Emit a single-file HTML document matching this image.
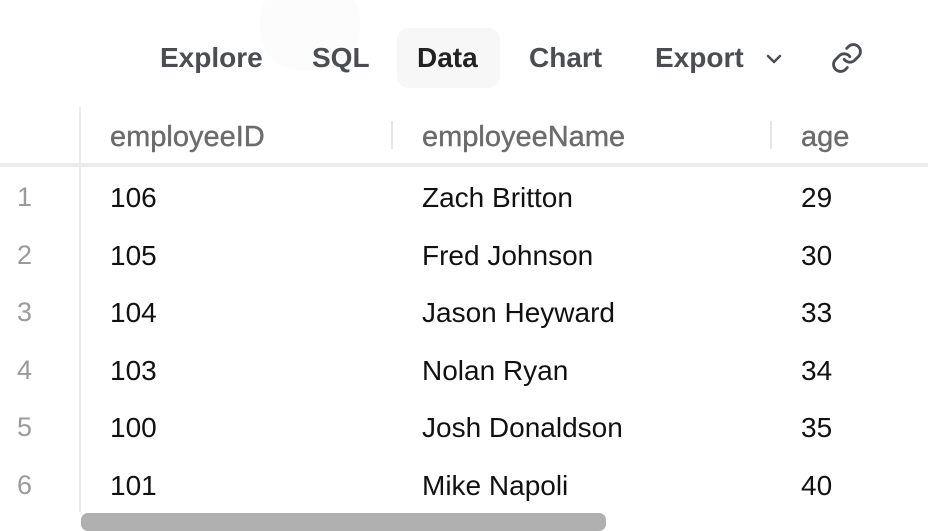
<!DOCTYPE html>
<html><head><style>
body{margin:0;width:928px;height:525px;overflow:hidden;background:#fff;font-family:"Liberation Sans",sans-serif;position:relative}
.a{position:absolute;white-space:nowrap}
.nav{font-size:28px;font-weight:bold;color:#4a4d52;top:42px}
.h{font-size:29px;color:#6b6b6b;top:121px;-webkit-text-stroke:0.4px #6b6b6b}
.n{font-size:27px;color:#9a9a9a;left:17px}
.c{font-size:28px;color:#111}
</style></head><body>
<div class="a" style="left:260px;top:-20px;width:100px;height:90px;border-radius:40px;background:#fcfcfc"></div>
<div class="a" style="left:397px;top:28px;width:103px;height:60px;border-radius:12px;background:#f7f7f7"></div>
<div class="a nav" style="left:160px">Explore</div>
<div class="a nav" style="left:312px">SQL</div>
<div class="a nav" style="left:417px;color:#222">Data</div>
<div class="a nav" style="left:529px">Chart</div>
<div class="a nav" style="left:655px">Export</div>
<svg class="a" style="left:764px;top:51px" width="20" height="16" viewBox="0 0 20 16"><path d="M4 5l6 6 6-6" fill="none" stroke="#4a4d52" stroke-width="2.5" stroke-linecap="round" stroke-linejoin="round"/></svg>
<svg class="a" style="left:830px;top:41px" width="34" height="34" viewBox="0 0 24 24" fill="none" stroke="#4a4d52" stroke-width="2" stroke-linecap="round"><path d="M10 13a5 5 0 0 0 7.5.5l3-3a5 5 0 0 0-7-7l-1.7 1.7"/><path d="M14 11a5 5 0 0 0-7.5-.5l-3 3a5 5 0 0 0 7 7l1.7-1.7"/></svg>
<div class="a" style="left:79px;top:107px;width:2px;height:405px;background:#ececec"></div>
<div class="a" style="left:391px;top:121px;width:2px;height:28px;background:#e6e6e6"></div>
<div class="a" style="left:770px;top:121px;width:2px;height:28px;background:#e6e6e6"></div>
<div class="a" style="left:0;top:163px;width:928px;height:4px;background:#ececec"></div>
<div class="a h" style="left:110px">employeeID</div>
<div class="a h" style="left:422px">employeeName</div>
<div class="a h" style="left:801px">age</div>
<div class="a n" style="top:182px">1</div><div class="a c" style="left:110px;top:182px">106</div><div class="a c" style="left:422px;top:182px">Zach Britton</div><div class="a c" style="left:801px;top:182px">29</div>
<div class="a n" style="top:240px">2</div><div class="a c" style="left:110px;top:240px">105</div><div class="a c" style="left:422px;top:240px">Fred Johnson</div><div class="a c" style="left:801px;top:240px">30</div>
<div class="a n" style="top:297px">3</div><div class="a c" style="left:110px;top:297px">104</div><div class="a c" style="left:422px;top:297px">Jason Heyward</div><div class="a c" style="left:801px;top:297px">33</div>
<div class="a n" style="top:355px">4</div><div class="a c" style="left:110px;top:355px">103</div><div class="a c" style="left:422px;top:355px">Nolan Ryan</div><div class="a c" style="left:801px;top:355px">34</div>
<div class="a n" style="top:412px">5</div><div class="a c" style="left:110px;top:412px">100</div><div class="a c" style="left:422px;top:412px">Josh Donaldson</div><div class="a c" style="left:801px;top:412px">35</div>
<div class="a n" style="top:470px">6</div><div class="a c" style="left:110px;top:470px">101</div><div class="a c" style="left:422px;top:470px">Mike Napoli</div><div class="a c" style="left:801px;top:470px">40</div>
<div class="a" style="left:81px;top:513px;width:525px;height:18px;border-radius:7px;background:#b0b0b0"></div>
</body></html>
